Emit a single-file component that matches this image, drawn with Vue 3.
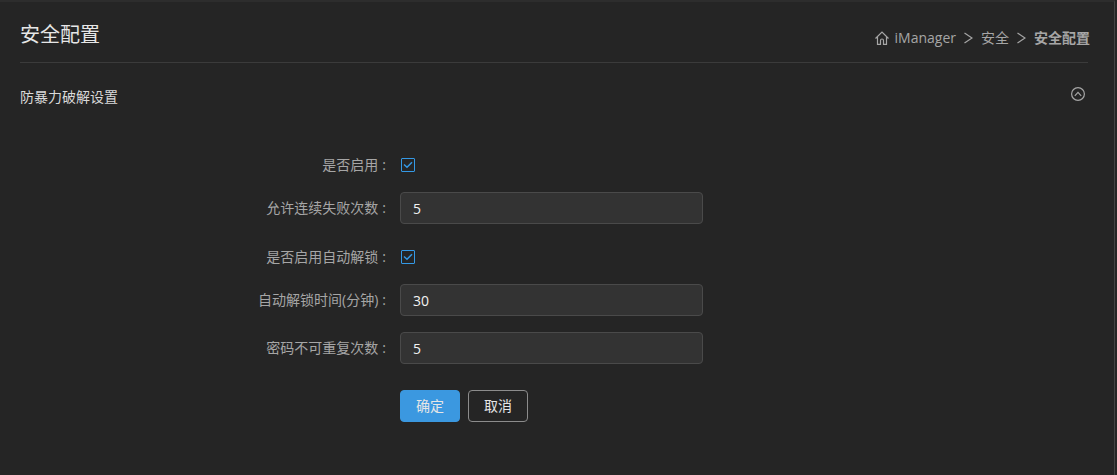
<script setup>
import { ref } from 'vue'

const open = ref(true)
const fields = ref([
  { id: 'enabled', label: '是否启用', type: 'checkbox', value: true },
  { id: 'fail-count', label: '允许连续失败次数', type: 'text', value: '5' },
  { id: 'auto-unlock', label: '是否启用自动解锁', type: 'checkbox', value: true },
  { id: 'unlock-time', label: '自动解锁时间(分钟)', type: 'text', value: '30' },
  { id: 'no-repeat', label: '密码不可重复次数', type: 'text', value: '5' }
])
</script>

<template>
  <main class="page">
    <header class="header">
      <h1>安全配置</h1>
      <nav class="crumbs" aria-label="breadcrumb">
        <a href="#" class="home">
          <svg width="14" height="14" viewBox="0 0 14 14" fill="none" stroke="currentColor" stroke-width="1.2" aria-hidden="true">
            <path d="M.5 7.500 7 1l6.500 6.500M2.500 6v7.400h3V9.500q0-1.500 1.500-1.500t1.500 1.500v3.900h3V6" />
          </svg>
          <span>iManager</span>
        </a>
        <svg class="sep" width="9" height="12" viewBox="0 0 9 12" aria-hidden="true"><path d="M.5 1 8 6 .5 11" /></svg>
        <a href="#">安全</a>
        <svg class="sep" width="9" height="12" viewBox="0 0 9 12" aria-hidden="true"><path d="M.5 1 8 6 .5 11" /></svg>
        <strong>安全配置</strong>
      </nav>
    </header>

    <section>
      <div class="section-head">
        <h2>防暴力破解设置</h2>
        <button type="button" class="toggle" :aria-expanded="open" aria-label="折叠" @click="open = !open">
          <svg width="14" height="14" viewBox="0 0 14 14" fill="none" stroke="currentColor" stroke-width="1.2">
            <circle cx="7" cy="7" r="6.400" />
            <path d="M3.800 8.800 7 5.300l3.200 3.500" />
          </svg>
        </button>
      </div>

      <form v-if="open" class="form" @submit.prevent>
        <div v-for="f in fields" :key="f.id" class="row" :class="f.type">
          <label :for="f.id">{{ f.label }}<span class="colon">:</span></label>
          <span v-if="f.type === 'checkbox'" class="check-wrap">
            <input :id="f.id" v-model="f.value" type="checkbox" class="check" />
            <svg v-if="f.value" class="tick" width="14" height="14" viewBox="0 0 14 14" aria-hidden="true">
              <path d="M3 6.500 6 9.200l5-5" />
            </svg>
          </span>
          <input v-else :id="f.id" v-model="f.value" type="text" class="text-input" />
        </div>
        <div class="row actions">
          <div class="buttons">
            <button type="submit" class="btn primary">确定</button>
            <button type="button" class="btn">取消</button>
          </div>
        </div>
      </form>
    </section>
  </main>
</template>

<style>
body {
  background: #252525;
}
</style>

<style scoped>
.page {
  box-sizing: border-box;
  min-height: 100vh;
  margin-right: 2px;
  padding: 0 26px 0 20px;
  border-top: 2px solid #2d2d2d;
  border-right: 1px solid #444;
  background: #252525;
  color: #a6a6a6;
  font: 14px/22px "Open Sans", "Noto Sans CJK SC", sans-serif;
}
.header {
  display: flex;
  align-items: center;
  justify-content: space-between;
  height: 60px;
  border-bottom: 1px solid #3b3b3b;
}
h1 {
  margin: 0;
  padding-top: 6px;
  font-size: 20px;
  line-height: 28px;
  font-weight: 400;
  color: #e6e6e6;
}
.crumbs {
  display: flex;
  align-items: center;
  gap: 8px;
  margin-right: -2px;
  padding-top: 12px;
}
.crumbs a {
  color: inherit;
  text-decoration: none;
}
.home {
  display: flex;
  align-items: center;
  gap: 6px;
}
.sep {
  fill: none;
  stroke: currentColor;
  stroke-width: 1.2;
}
.section-head {
  display: flex;
  justify-content: space-between;
  padding: 23px 3px 0 0;
}
h2 {
  margin: 0;
  font-size: 14px;
  font-weight: 400;
  color: #d9d9d9;
}
.toggle {
  display: block;
  width: 14px;
  height: 14px;
  margin-top: 1px;
  padding: 0;
  border: 0;
  background: none;
  color: #a6a6a6;
}
.toggle svg {
  display: block;
}
.form {
  padding-top: 40px;
}
.row {
  display: grid;
  grid-template-columns: 380fr 303fr 385fr;
  align-items: center;
  box-sizing: border-box;
  height: 32px;
  margin-bottom: 16px;
}
.row.checkbox {
  margin-bottom: 12px;
  padding-top: 2px;
}
label {
  text-align: right;
}
.colon {
  margin: 0 14px 0 4px;
}
.text-input {
  box-sizing: border-box;
  width: 100%;
  height: 32px;
  padding: 0 12px;
  border: 1px solid #4a4a4a;
  border-radius: 4px;
  background: #333;
  color: #f2f2f2;
  font: inherit;
}
.check-wrap {
  position: relative;
  width: 14px;
  height: 14px;
  margin-left: 1px;
}
.check {
  display: block;
  appearance: none;
  box-sizing: border-box;
  width: 14px;
  height: 14px;
  margin: 0;
  border: 1px solid #3499e5;
  border-radius: 1px;
}
.tick {
  position: absolute;
  inset: 0;
  fill: none;
  stroke: #3499e5;
  stroke-width: 1.5;
  pointer-events: none;
}
.actions {
  margin: 26px 0 0;
}
.buttons {
  grid-column: 2;
  display: flex;
  gap: 8px;
}
.btn {
  width: 60px;
  height: 32px;
  padding: 0;
  border: 1px solid #8c8c8c;
  border-radius: 4px;
  background: transparent;
  color: #e6e6e6;
  font: inherit;
}
.primary {
  border-color: #3b98e0;
  background: #3b98e0;
}
</style>
